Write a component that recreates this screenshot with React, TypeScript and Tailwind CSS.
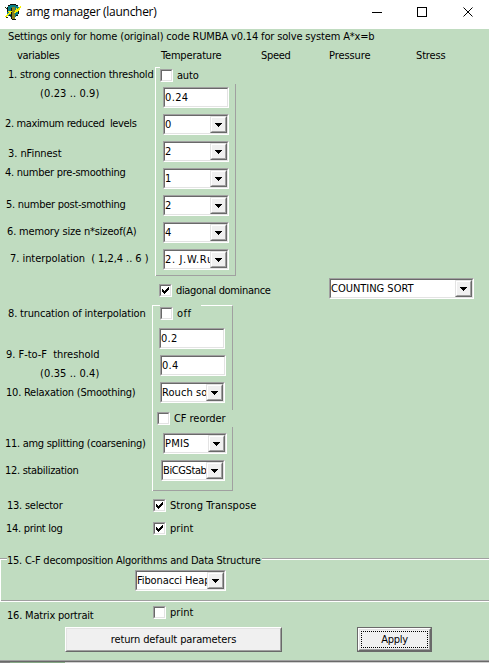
import { useLayoutEffect, useRef, useState } from "react";
import type { ReactNode } from "react";

/** Text line whose tracking is spread so that it fills `w` pixels. */
function T({ w, className = "", children }: { w: number; className?: string; children: string }) {
  const ref = useRef<HTMLSpanElement>(null);
  const [spacing, setSpacing] = useState(0);
  useLayoutEffect(() => {
    if (ref.current) {
      setSpacing((w - 0.5 - ref.current.getBoundingClientRect().width) / children.length);
    }
  }, []);
  return (
    <div className={`h-[14px] shrink-0 whitespace-pre leading-[16px] ${className}`}>
      <span ref={ref} style={{ letterSpacing: spacing }}>{children}</span>
    </div>
  );
}

function Sunken({ className = "", children }: { className?: string; children?: ReactNode }) {
  return (
    <div className={`shrink-0 border border-t-[#a0a0a0] border-r-white border-b-white border-l-[#a0a0a0] ${className}`}>
      <div className="flex h-full w-full border border-t-[#696969] border-r-[#e3e3e3] border-b-[#e3e3e3] border-l-[#696969] bg-white">
        {children}
      </div>
    </div>
  );
}

function Check({ on = false, className = "" }: { on?: boolean; className?: string }) {
  return (
    <Sunken className={`size-[13px] ${className}`}>
      {on && (
        <svg viewBox="0 0 9 9" className="size-[9px]" shapeRendering="crispEdges">
          <path d="M1 3h1v1h1v1h1v-1h1v-1h1v-1h1v-1h1v3h-1v1h-1v1h-1v1h-1v1h-1v-1h-1v-1h-1z" />
        </svg>
      )}
    </Sunken>
  );
}

function Edit({ value, w, className = "" }: { value: string; w: number; className?: string }) {
  return (
    <Sunken className={`h-[21px] w-[66px] ${className}`}>
      <T w={w} className="mt-px">{value}</T>
    </Sunken>
  );
}

function Combo({ value, w, className = "" }: { value: string; w: number; className?: string }) {
  return (
    <Sunken className={`h-[21px] ${className}`}>
      <div className="min-w-0 flex-1 overflow-hidden pt-px">
        <T w={w}>{value}</T>
      </div>
      <div className="h-[17px] w-[17px] shrink-0 border border-t-[#e3e3e3] border-r-[#696969] border-b-[#696969] border-l-[#e3e3e3]">
        <div className="flex h-full w-full items-center justify-center border border-t-white border-r-[#a0a0a0] border-b-[#a0a0a0] border-l-white bg-[#f0f0f0]">
          <svg viewBox="0 0 7 4" className="h-[4px] w-[7px]" shapeRendering="crispEdges">
            <path d="M0 0h7v1h-1v1h-1v1h-1v1h-1v-1h-1v-1h-1v-1h-1z" />
          </svg>
        </div>
      </div>
    </Sunken>
  );
}

function TitleBar() {
  return (
    <header className="flex h-[29px] items-start bg-white">
      <svg viewBox="0 0 16 16" className="mt-[4px] ml-[5px] size-4" shapeRendering="crispEdges">
        <path d="M5 0h6v1h2v2h1v7h-1v2h-2v1H5v-1H3v-2H2V3h1V1h2z" fill="#087f84" />
        <path d="M5 0h6v1H5zM3 1h2v1H3zM11 1h2v1h-2zM2 3h1v5H2zM13 7h1v3h-1zM11 11h2v1h-2zM4 11h2v1H4zM6 4h1v11H6zM7 15h4v1H7z" fill="#101010" />
        <path d="M7 3h3v12H7z" fill="#8a8420" />
        <path d="M0 12h1v-1h1v-1h1V9h1V8H3V7h4v1H6v2H4v1H3v1H2v1H0zM9 8h1V6h1V4h1v1h1V4h1V3h1V2h1v2h-1v2h-1v1h-1v1h-2v1H9z" fill="#f8f000" />
        <path d="M0 3h1v1H0zM1 4h1v1H1zM1 13h2v1H1z" fill="#303000" />
      </svg>
      <T w={131} className="mt-[4px] ml-[5px] font-['Open_Sans',sans-serif] text-[12px] [font-stretch:normal]">amg manager (launcher)</T>
      <svg viewBox="0 0 102 12" className="mt-[6px] ml-auto mr-[15px] h-[12px] w-[102px]" fill="none" stroke="#000">
        <path d="M0 6.5h10M45.500 1.500h9v9h-9z" shapeRendering="crispEdges" />
        <path d="M91.500 1.500l9 9M100.500 1.500l-9 9" />
      </svg>
    </header>
  );
}

export default function App() {
  return (
    <div className="flex h-[663px] w-[489px] flex-col overflow-hidden bg-[#c0dcc0] font-['DejaVu_Sans_Condensed','DejaVu_Sans',sans-serif] text-[11px] text-black [font-stretch:condensed]">
      <TitleBar />
      <T w={367} className="ml-[8px]">Settings only for home (original) code RUMBA v0.14 for solve system A*x=b</T>
      <div className="mt-[5px] flex h-[18px]">
        <T w={43} className="w-[144px] ml-[17px]">variables</T>
        <T w={61} className="w-[100px]">Temperature</T>
        <T w={30} className="w-[68px]">Speed</T>
        <T w={42} className="w-[87px]">Pressure</T>
        <T w={30}>Stress</T>
      </div>

      <section className="flex h-[210px]">
        <div className="flex w-[155px] flex-col">
          <T w={146} className="mt-px ml-[8px]">1. strong connection threshold</T>
          <T w={60} className="mt-[5px] ml-[40px]">(0.23 .. 0.9)</T>
          <T w={132} className="mt-[16px] ml-[5px]">2. maximum reduced  levels</T>
          <T w={54} className="mt-[16px] ml-[8px]">3. nFinnest</T>
          <T w={121} className="mt-[5px] ml-[5px]">4. number pre-smoothing</T>
          <T w={120} className="mt-[18px] ml-[6px]">5. number post-smothing</T>
          <T w={130} className="mt-[13px] ml-[7px]">6. memory size n*sizeof(A)</T>
          <T w={139} className="mt-[13px] ml-[10px]">7. interpolation  ( 1,2,4 .. 6 )</T>
        </div>
        <div className="mt-px flex w-[81px] flex-col border-l border-white">
          <div className="flex h-[17px]">
            <div className="h-px w-[4px] bg-white" />
            <Check className="mt-[2px]" />
            <T w={22} className="mt-px ml-[4px]">auto</T>
          </div>
          <div className="flex flex-1 flex-col gap-[6px] border-r border-b border-[#a0a0a0] pt-[3px] pl-[7px]">
            <Edit value="0.24" w={24} />
            <Combo value="0" w={7} className="w-[66px]" />
            <Combo value="2" w={7} className="w-[66px]" />
            <Combo value="1" w={7} className="w-[66px]" />
            <Combo value="2" w={7} className="w-[66px]" />
            <Combo value="4" w={7} className="w-[66px]" />
            <Combo value="2. J.W.Ruge" w={63} className="w-[66px]" />
          </div>
        </div>
      </section>

      <div className="flex h-[29px]">
        <Check on className="mt-[8px] ml-[159px]" />
        <T w={95} className="mt-[7px] ml-[4px] w-[153px]">diagonal dominance</T>
        <Combo value="COUNTING SORT" w={83} className="mt-[2px] w-[145px]" />
      </div>

      <section className="flex h-[186px]">
        <div className="flex w-[152px] flex-col">
          <T w={138} className="mt-px ml-[8px]">8. truncation of interpolation</T>
          <T w={94} className="mt-[27px] ml-[6px]">9. F-to-F  threshold</T>
          <T w={60} className="mt-[5px] ml-[40px]">(0.35 .. 0.4)</T>
          <T w={130} className="mt-[5px] ml-[6px]">10. Relaxation (Smoothing)</T>
          <T w={141} className="mt-[37px] ml-[5px]">11. amg splitting (coarsening)</T>
          <T w={74} className="mt-[13px] ml-[5px]">12. stabilization</T>
        </div>
        <div className="flex w-[81px] flex-col border-l border-white">
          <div className="flex h-[18px]">
            <div className="h-px w-[7px] bg-white" />
            <Check className="mt-[2px]" />
            <T w={15} className="mt-px ml-[4px] w-[24px]">off</T>
            <div className="flex-1 border-t border-r border-t-white border-r-[#a0a0a0]" />
          </div>
          <div className="flex h-[87px] flex-col gap-[6px] border-r border-[#a0a0a0] pt-[5px] pl-[7px]">
            <Edit value="0.2" w={17} className="-ml-px" />
            <Edit value="0.4" w={17} />
            <Combo value="Rouch sor" w={50} className="w-[65px]" />
          </div>
          <div className="flex h-[17px] pl-[4px]">
            <Check className="mt-[2px]" />
            <T w={52} className="mt-px ml-[4px]">CF reorder</T>
          </div>
          <div className="flex flex-1 flex-col gap-[6px] border-r border-b border-[#a0a0a0] pt-[6px] pl-[8px]">
            <Combo value="PMIS" w={25} className="ml-[2px] w-[64px]" />
            <Combo value="BiCGStab" w={44} className="w-[64px]" />
          </div>
        </div>
      </section>

      <div className="mt-[7px] flex h-[23px]">
        <T w={56} className="ml-[7px] w-[146px]">13. selector</T>
        <Check on className="mt-px" />
        <T w={87} className="ml-[4px]">Strong Transpose</T>
      </div>
      <div className="flex h-[32px]">
        <T w={57} className="ml-[6px] w-[147px]">14. print log</T>
        <Check on className="mt-px" />
        <T w={24} className="ml-[4px]">print</T>
      </div>

      <section className="flex h-[49px] flex-col">
        <div className="flex h-[17px]">
          <div className="mt-[5px] h-[2px] w-[7px] border-t border-b border-t-[#a0a0a0] border-b-white" />
          <T w={254} className="w-[255px]">15. C-F decomposition Algorithms and Data Structure</T>
          <div className="mt-[5px] h-[2px] flex-1 border-t border-b border-t-[#a0a0a0] border-b-white" />
        </div>
        <div className="flex flex-1 border-b border-white">
          <div className="-mt-[10px] w-px bg-white" />
          <div className="flex-1 border-b border-[#a0a0a0]">
            <Combo value="Fibonacci Heap" w={74} className="ml-[134px] w-[91px]" />
          </div>
        </div>
      </section>

      <div className="flex h-[25px]">
        <T w={87} className="mt-[6px] ml-[7px] w-[146px]">16. Matrix portrait</T>
        <Check className="mt-[4px]" />
        <T w={24} className="mt-[3px] ml-[4px]">print</T>
      </div>

      <div className="flex h-[33px]">
        <button className="ml-[65px] h-[25px] w-[217px] border border-t-white border-r-[#696969] border-b-[#696969] border-l-white">
          <div className="flex h-full items-start justify-center border border-t-[#e3e3e3] border-r-[#a0a0a0] border-b-[#a0a0a0] border-l-[#e3e3e3] bg-[#f0f0f0] pt-[3px]">
            <T w={126}>return default parameters</T>
          </div>
        </button>
        <button className="ml-[75px] h-[25px] w-[75px] border border-[#696969]">
          <div className="h-full border border-t-white border-r-[#696969] border-b-[#696969] border-l-white">
            <div className="h-full border border-t-[#e3e3e3] border-r-[#a0a0a0] border-b-[#a0a0a0] border-l-[#e3e3e3] bg-[#f0f0f0] p-px">
              <div className="flex h-full items-center justify-center border border-dotted border-black">
                <T w={27} className="-mt-px">Apply</T>
              </div>
            </div>
          </div>
        </button>
      </div>
      <div className="h-[2px] shrink-0 border-t border-[#a0a0a0] bg-[#696969]" />
      <div className="flex h-px shrink-0 bg-[#d0d0d0]">
        <div className="w-[10px] bg-[#808080]" />
        <div className="w-[55px] bg-[#86a886]" />
      </div>
    </div>
  );
}
